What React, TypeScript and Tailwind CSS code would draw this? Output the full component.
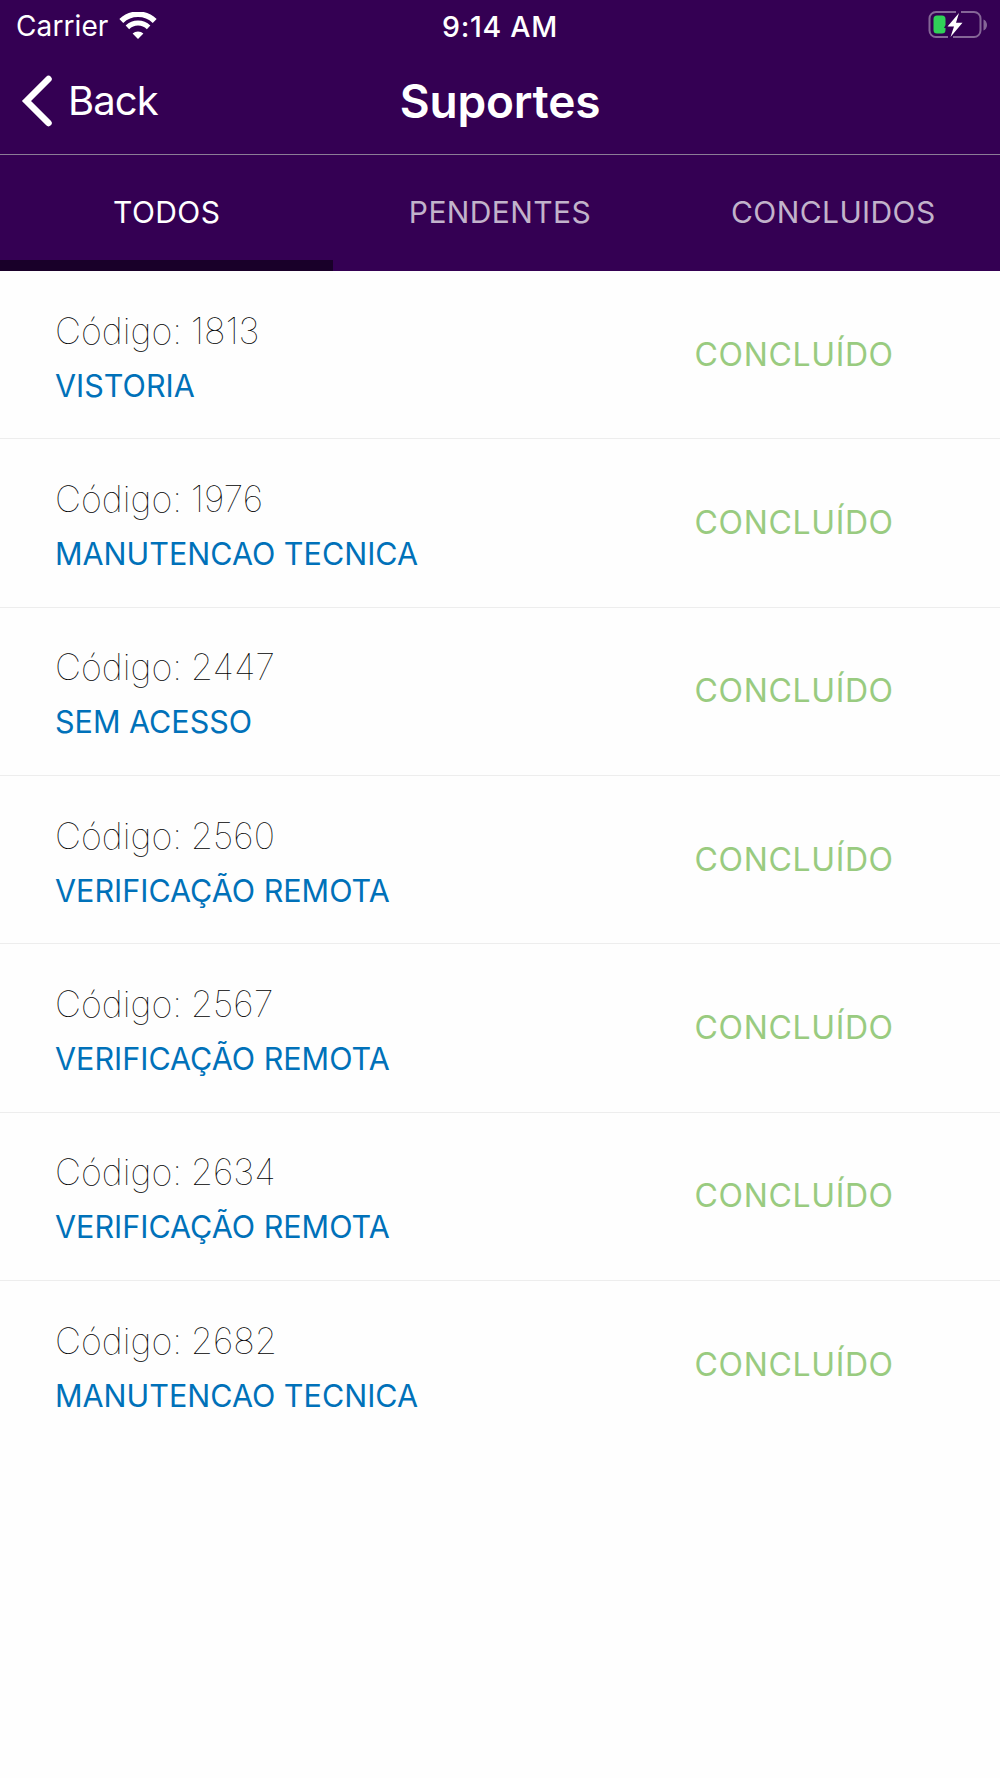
import { useState } from "react";

interface Suporte {
  codigo: number;
  tipo: string;
}

const tabs = ["TODOS", "PENDENTES", "CONCLUIDOS"];

const suportes: Suporte[] = [
  { codigo: 1813, tipo: "VISTORIA" },
  { codigo: 1976, tipo: "MANUTENCAO TECNICA" },
  { codigo: 2447, tipo: "SEM ACESSO" },
  { codigo: 2560, tipo: "VERIFICAÇÃO REMOTA" },
  { codigo: 2567, tipo: "VERIFICAÇÃO REMOTA" },
  { codigo: 2634, tipo: "VERIFICAÇÃO REMOTA" },
  { codigo: 2682, tipo: "MANUTENCAO TECNICA" },
];

const WifiIcon = () => (
  <svg width="38" height="28" viewBox="0 0 38 28" className="ml-[11px]" fill="none" stroke="#fff">
    <path d="M2.300 9a24 24 0 0 1 33.400 0" strokeWidth="5.600" />
    <path d="M8.400 15.400a15.200 15.200 0 0 1 21.200 0" strokeWidth="5" />
    <path d="M13.600 21.600a7.800 7.800 0 0 1 10.800 0L19 27Z" fill="#fff" stroke="none" />
  </svg>
);

const BatteryIcon = () => (
  <svg width="60" height="28" viewBox="0 0 60 28" fill="none">
    <path d="M28 1H8a6.500 6.500 0 0 0-6.500 6.500v12a6.500 6.500 0 0 0 6.500 6.500h12" stroke="#fff" strokeOpacity="0.4" strokeWidth="2" />
    <path d="M33 1h13a6.500 6.500 0 0 1 6.500 6.500v12a6.500 6.500 0 0 1-6.500 6.500H25" stroke="#fff" strokeOpacity="0.4" strokeWidth="2" />
    <path d="M55.500 8.500v11c2-.8 3.500-3 3.500-5.500s-1.500-4.700-3.500-5.500Z" fill="#fff" fillOpacity="0.4" />
    <path d="M9 4.500h5q3.500 0 3.500 3.500v6l-1.500 3h1.500v2q0 3.500-3.500 3.500H9q-3.500 0-3.500-3.500V8q0-3.500 3.500-3.500Z" fill="#30d158" />
    <path d="M31 2 19.500 15.500h6.500L22.500 26 34.500 11.800h-6.500Z" fill="#fff" />
  </svg>
);

const App: React.FC = () => {
  const [active, setActive] = useState(0);

  return (
    <div className="min-h-[1778px] w-full bg-[#fefefe] font-['Inter',sans-serif] antialiased">
      <header className="bg-[#340053] text-white">
        {/* Status bar */}
        <div className="grid h-[50px] grid-cols-3 items-center">
          <div className="flex items-center pl-4">
            <span className="pt-0.5 text-[28px] leading-[49px] tracking-[0.1px]">Carrier</span>
            <WifiIcon />
          </div>
          <span className="pt-px text-center text-[28.5px] font-medium leading-[49px] tracking-[0.7px]">9:14 AM</span>
          <div className="flex justify-end pr-3 pb-px">
            <BatteryIcon />
          </div>
        </div>

        {/* Navigation bar */}
        <div className="grid h-[105px] grid-cols-3 border-b border-[#8b7c96] pb-[3px]">
          <button className="flex items-center pl-[21px]">
            <svg width="32" height="52" viewBox="0 0 32 52" fill="none">
              <path d="M27.500 4 5.500 26l22 22" stroke="#fff" strokeWidth="6.500" strokeLinecap="round" />
            </svg>
            <span className="ml-[15px] pt-px text-[40px] leading-none tracking-[-0.9px]">Back</span>
          </button>
          <h1 className="self-center text-center text-[46px] font-semibold leading-none tracking-[-0.2px]">Suportes</h1>
        </div>

        {/* Tabs */}
        <div className="grid h-[116px] grid-cols-3">
          {tabs.map((tab, index) => (
            <button
              key={tab}
              onClick={() => setActive(index)}
              className={`border-b-11 pt-[9px] text-[30px] leading-[95px] tracking-[0.4px] ${
                index === active ? "border-[#190029] text-white" : "border-transparent text-[#c2b3cb]"
              }`}
            >
              {tab}
            </button>
          ))}
        </div>
      </header>

      {/* List */}
      <ul>
        {suportes.map((item, index) => (
          <li
            key={item.codigo}
            className={`flex h-[168.33px] items-center ${
              index < suportes.length - 1 ? "border-b border-[#ededed]" : ""
            }`}
          >
            <div className="w-[694.5px] pl-[55px] pt-[7px]">
              <p className="text-[36px] font-thin leading-[46px] text-black [word-spacing:-1.5px]">
                Código: {item.codigo}
              </p>
              <p className="mt-[9px] text-[30.5px] leading-[46px] text-[#0071b9]">{item.tipo}</p>
            </div>
            <span className="text-[32px] tracking-[0.65px] text-[#99cb80]">CONCLUÍDO</span>
          </li>
        ))}
      </ul>
    </div>
  );
};

export default App;
